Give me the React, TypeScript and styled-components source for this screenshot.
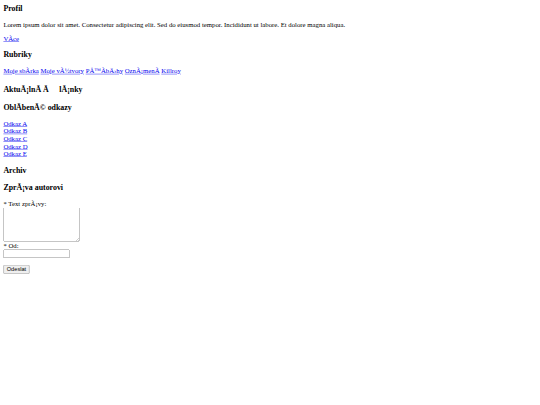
import React from 'react'
import styled, { createGlobalStyle } from 'styled-components'

// the reference is a 1280x960 page shrunk down to 540x405
const SCALE = 540 / 1280

const GlobalStyle = createGlobalStyle`
  html, body {
    margin: 0;
    padding: 0;
    overflow: hidden;
    background: #fff;
  }
  a {
    color: #0000ee;
  }
`

const Viewport = styled.div`
  width: 540px;
  height: 405px;
  overflow: hidden;
`

const Page = styled.div`
  width: 1280px;
  box-sizing: border-box;
  padding: 8px;
  transform: scale(${SCALE});
  transform-origin: 0 0;
  font-family: "Liberation Serif", "Times New Roman", serif;
  font-size: 16px;
  color: #000;
`

const Title = styled.h3<{ $first?: boolean; $tall?: boolean }>`
  font-size: 1.17em;
  font-weight: bold;
  line-height: ${props => (props.$tall ? '27.5px' : 'normal')};
  margin: ${props => (props.$first ? '0 0 1em' : '1em 0')};
`

// broken control character, drawn as a wide blank in the original
const Glitch = styled.span`
  margin: 0 5px;
`

const Text = styled.p`
  margin: 1em 0;
`

const LinkList = styled.ul`
  list-style: none;
  margin: 1em 0;
  padding: 0;
`

const Field = styled.label`
  display: block;
`

const TextArea = styled.textarea`
  display: block;
  font-family: "Liberation Mono", monospace;
  font-size: 13.333px;
`

const Input = styled.input`
  display: block;
  width: 149px;
  font-family: "Liberation Sans", Arial, sans-serif;
  font-size: 13.333px;
`

const Actions = styled.p`
  margin: 1em 0;
`

const Button = styled.button`
  font-family: "Liberation Sans", Arial, sans-serif;
  font-size: 13.333px;
`

const App: React.FC = () => {
  const categories = [
    'Moje sbÃ\u00ADrka',
    'Moje vÃ½tvory',
    'PÅ™Ã\u00ADbÄ›hy',
    'OznÃ¡menÃ\u00AD',
    'Killroy',
  ]
  const links = ['Odkaz A', 'Odkaz B', 'Odkaz C', 'Odkaz D', 'Odkaz E']

  return (
    <Viewport>
      <GlobalStyle />
      <Page>
        <Title $first>Profil</Title>
        <Text>
          Lorem ipsum dolor sit amet. Consectetur adipiscing elit. Sed do eiusmod tempor. Incididunt ut
          labore. Et dolore magna aliqua.
        </Text>
        <Text>
          <a href="#">VÃ{'\u00AD'}ce</a>
        </Text>

        <Title>Rubriky</Title>
        <Text>
          {categories.map((c, i) => (
            <React.Fragment key={c}>
              {i > 0 && ' '}
              <a href="#">{c}</a>
            </React.Fragment>
          ))}
        </Text>

        <Title $tall>
          AktuÃ¡lnÃ{'\u00AD'} Ä<Glitch>{'\u008D'}</Glitch>lÃ¡nky
        </Title>
        <Title>OblÃ{'\u00AD'}benÃ© odkazy</Title>
        <LinkList>
          {links.map(l => (
            <li key={l}>
              <a href="#">{l}</a>
            </li>
          ))}
        </LinkList>

        <Title>Archiv</Title>
        <Title>ZprÃ¡va autorovi</Title>
        <form onSubmit={e => e.preventDefault()}>
          <Field>
            * Text zprÃ¡vy:
            <TextArea rows={5} cols={20} />
          </Field>
          <Field>
            * Od:
            <Input type="text" />
          </Field>
          <Actions>
            <Button type="submit">Odeslat</Button>
          </Actions>
        </form>
      </Page>
    </Viewport>
  )
}

export default App
